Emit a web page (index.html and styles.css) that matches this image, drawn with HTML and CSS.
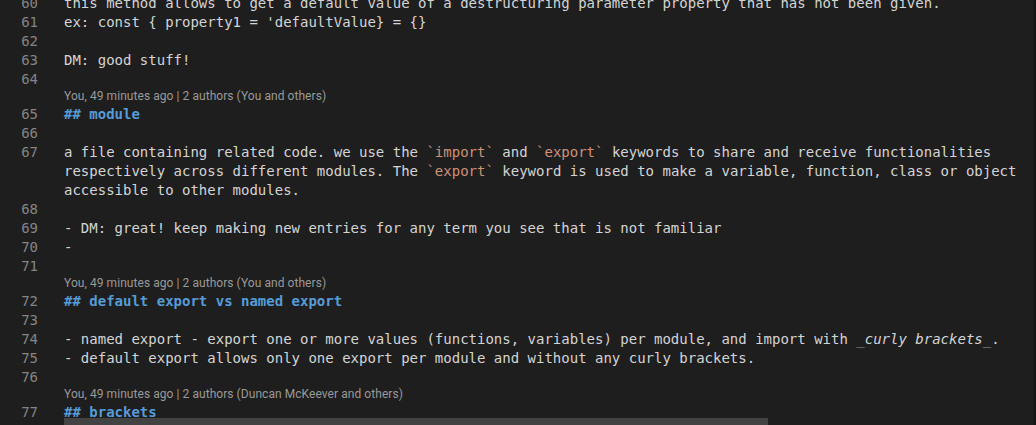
FILE: index.html
```html
<!DOCTYPE html>
<html lang="en">
<head>
<meta charset="utf-8">
<title>module.md</title>
<link rel="stylesheet" href="styles.css">
</head>
<body>
<div class="editor">
  <div class="lines">
    <div class="row"><span class="ln">60</span><span class="code">this method allows to get a default value of a destructuring parameter property that has not been given.</span></div>
    <div class="row"><span class="ln">61</span><span class="code">ex: const { property1 = 'defaultValue} = {}</span></div>
    <div class="row"><span class="ln">62</span><span class="code"></span></div>
    <div class="row"><span class="ln">63</span><span class="code">DM: good stuff!</span></div>
    <div class="row"><span class="ln">64</span><span class="code"></span></div>
    <div class="lens"><span class="lens-text">You, 49 minutes ago | 2 authors (You and others)</span></div>
    <div class="row"><span class="ln">65</span><span class="code heading">## module</span></div>
    <div class="row"><span class="ln">66</span><span class="code"></span></div>
    <div class="row"><span class="ln">67</span><span class="code">a file containing related code. we use the <span class="raw">`import`</span> and <span class="raw">`export`</span> keywords to share and receive functionalities</span></div>
    <div class="row"><span class="ln"></span><span class="code">respectively across different modules. The <span class="raw">`export`</span> keyword is used to make a variable, function, class or object</span></div>
    <div class="row"><span class="ln"></span><span class="code">accessible to other modules.</span></div>
    <div class="row"><span class="ln">68</span><span class="code"></span></div>
    <div class="row"><span class="ln">69</span><span class="code">- DM: great! keep making new entries for any term you see that is not familiar</span></div>
    <div class="row"><span class="ln">70</span><span class="code">-</span></div>
    <div class="row"><span class="ln">71</span><span class="code"></span></div>
    <div class="lens"><span class="lens-text">You, 49 minutes ago | 2 authors (You and others)</span></div>
    <div class="row"><span class="ln">72</span><span class="code heading">## default export vs named export</span></div>
    <div class="row"><span class="ln">73</span><span class="code"></span></div>
    <div class="row"><span class="ln">74</span><span class="code">- named export - export one or more values (functions, variables) per module, and import with <span class="mark">_</span><em class="ital">curly brackets</em><span class="mark">_</span>.</span></div>
    <div class="row"><span class="ln">75</span><span class="code">- default export allows only one export per module and without any curly brackets.</span></div>
    <div class="row"><span class="ln">76</span><span class="code"></span></div>
    <div class="lens"><span class="lens-text">You, 49 minutes ago | 2 authors (Duncan McKeever and others)</span></div>
    <div class="row"><span class="ln">77</span><span class="code heading">## brackets</span></div>
  </div>
  <div class="hscroll"></div>
  <div class="vshadow"></div>
</div>
</body>
</html>
```

FILE: styles.css
```css
html, body {
  margin: 0;
  padding: 0;
  background: #1e1e1e;
}

.editor {
  position: relative;
  width: 1036px;
  height: 425px;
  overflow: hidden;
  background: #1e1e1e;
}

.lines {
  margin-top: -6px;
  display: flex;
  flex-direction: column;
}

.row {
  display: grid;
  grid-template-columns: 38px 26px 1fr;
  height: 19px;
  font-family: "DejaVu Sans Mono", monospace;
  font-size: 14px;
  line-height: 19px;
  color: #d4d4d4;
  white-space: pre;
}

.ln {
  grid-column: 1;
  text-align: right;
  color: #858585;
}

.code {
  grid-column: 3;
}

.heading {
  color: #569cd6;
  font-weight: bold;
}

.raw {
  color: #ce9178;
}

.ital {
  font-style: italic;
}

.mark {
  color: #9a9a9a;
}

.lens {
  height: 16px;
  padding-left: 64px;
  font-family: Roboto, "Noto Sans", sans-serif;
  font-size: 12px;
  line-height: 14px;
  letter-spacing: 0.06px;
  color: #999999;
  white-space: pre;
}

.hscroll {
  position: absolute;
  left: 64px;
  top: 418px;
  width: 704px;
  height: 10px;
  background: #424242;
}

.vshadow {
  position: absolute;
  right: 0;
  top: 0;
  width: 3px;
  height: 100%;
  background: linear-gradient(to right, #1b1b1b, #121212);
}
```
